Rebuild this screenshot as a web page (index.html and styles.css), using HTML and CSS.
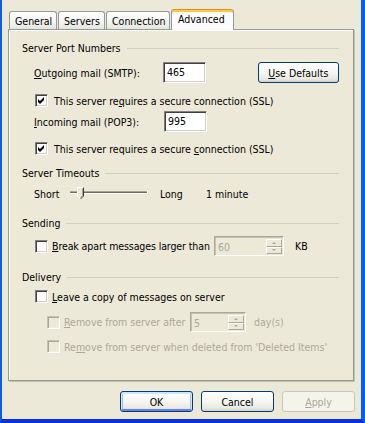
FILE: index.html
```html
<!DOCTYPE html>
<html lang="en">
<head>
    <meta charset="UTF-8">
    <meta name="viewport" content="width=device-width, initial-scale=1.0">
    <title>Account Properties</title>
    <link rel="stylesheet" href="styles.css">
</head>
<body>
    <div class="window">
        <div class="tabs">
            <div class="tab tab-general">General</div>
            <div class="tab tab-servers">Servers</div>
            <div class="tab tab-connection">Connection</div>
            <div class="tab tab-advanced active">Advanced</div>
        </div>

        <div class="panel">
            <div class="group-title gt-ports"><span>Server Port Numbers</span></div>
            <div class="row port-row smtp-row">
                <span class="label"><u>O</u>utgoing mail (SMTP):</span>
                <div class="field">465</div>
                <button class="btn defaults"><u>U</u>se Defaults</button>
            </div>
            <div class="row check-row ssl1-row">
                <span class="check"><svg viewBox="0 0 7 7" width="7" height="7"><polygon points="0,2 2,4 6,0 6,3 2,7 0,5" fill="#000"/></svg></span>
                <span class="check-label">This server re<u>q</u>uires a secure connection (SSL)</span>
            </div>
            <div class="row port-row pop-row">
                <span class="label"><u>I</u>ncoming mail (POP3):</span>
                <div class="field">995</div>
            </div>
            <div class="row check-row ssl2-row">
                <span class="check"><svg viewBox="0 0 7 7" width="7" height="7"><polygon points="0,2 2,4 6,0 6,3 2,7 0,5" fill="#000"/></svg></span>
                <span class="check-label">This server requires a secure <u>c</u>onnection (SSL)</span>
            </div>

            <div class="group-title gt-timeouts"><span>Server Timeouts</span></div>
            <div class="row slider-row">
                <span class="short">Short</span>
                <svg class="slider" width="86" height="16" viewBox="0 0 86 16">
                    <rect x="3" y="5" width="77" height="1" fill="#A7A69C"/>
                    <rect x="3" y="6" width="77" height="1" fill="#6F6E66"/>
                    <rect x="3" y="7" width="78" height="1" fill="#FFFFFF"/>
                    <rect x="80" y="5" width="1" height="3" fill="#FFFFFF"/>
                    <polygon points="10.5,1.5 16.5,1.5 16.5,10 13.5,13 10.5,10" fill="#ECE9D8"/>
                    <polyline points="10.5,10 10.5,1.5 16.5,1.5" fill="none" stroke="#FFFFFF"/>
                    <polyline points="16.5,1.5 16.5,10 13.5,13" fill="none" stroke="#404040"/>
                    <polyline points="15.5,2.5 15.5,9.5 13.5,11.5" fill="none" stroke="#A0A0A0"/>
                    <line x1="10.5" y1="10" x2="13" y2="12.5" stroke="#FFFFFF"/>
                </svg>
                <span class="long">Long</span>
                <span>1 minute</span>
            </div>

            <div class="group-title gt-sending"><span>Sending</span></div>
            <div class="row check-row break-row">
                <span class="check"></span>
                <span class="check-label break-label"><u>B</u>reak apart messages larger than</span>
                <div class="spin spin-kb">
                    <span class="spin-val">60</span>
                    <span class="spin-btns"><span class="spin-up"></span><span class="spin-down"></span></span>
                </div>
                <span class="unit-kb">KB</span>
            </div>

            <div class="group-title gt-delivery"><span>Delivery</span></div>
            <div class="row check-row leave-row">
                <span class="check"></span>
                <span class="check-label"><u>L</u>eave a copy of messages on server</span>
            </div>
            <div class="row check-row sub-row remove-row">
                <span class="check disabled"></span>
                <span class="check-label disabled-text remove-label"><u>R</u>emove from server after</span>
                <div class="spin spin-days">
                    <span class="spin-val">5</span>
                    <span class="spin-btns"><span class="spin-up"></span><span class="spin-down"></span></span>
                </div>
                <span class="disabled-text unit-days">day(s)</span>
            </div>
            <div class="row check-row sub-row deleted-row">
                <span class="check disabled"></span>
                <span class="check-label disabled-text">Re<u>m</u>ove from server when deleted from 'Deleted Items'</span>
            </div>
        </div>

        <div class="actions">
            <button class="btn default">OK</button>
            <button class="btn">Cancel</button>
            <button class="btn" disabled><u>A</u>pply</button>
        </div>
    </div>
</body>
</html>
```
FILE: styles.css
```css
* {
    box-sizing: border-box;
}
body {
    margin: 0;
    font-family: "DejaVu Sans Condensed", "Liberation Sans", sans-serif;
    font-size: 10.5px;
    color: #000;
}
.window {
    width: 365px;
    height: 423px;
    background: #ECE9D8;
    border-left: 2px solid #0A5DE8;
    border-right: 4px solid #0A5DE8;
    border-bottom: 4px solid #0831D9;
}

/* tabs */
.tabs {
    display: flex;
    align-items: flex-end;
    height: 29px;
    padding-left: 7px;
}
.tab {
    height: 18px;
    line-height: 18px;
    padding-left: 5px;
    margin-right: 1px;
    border: 1px solid #919B9C;
    border-bottom: none;
    border-radius: 3px 3px 0 0;
    background: linear-gradient(#FFFFFF, #F3F3EF 60%, #E6E5DE);
    white-space: nowrap;
}
.tab-general { width: 48px; }
.tab-servers { width: 47px; }
.tab-connection { width: 64px; }
.tab.active {
    position: relative;
    z-index: 1;
    width: 63px;
    height: 21px;
    line-height: 19px;
    padding-left: 6px;
    margin-bottom: -1px;
    background: #FCFCFE;
    border-top: 1px solid #E68B2C;
    box-shadow: inset 0 2px 0 #FFC73C;
}

/* panel */
.panel {
    margin-left: 6px;
    width: 346px;
    height: 352px;
    padding: 0 14px 0 13px;
    border: 1px solid #919B9C;
    box-shadow: inset 1px 1px 0 #FFFFFF, 1px 1px 0 #C5C2B2;
}
.group-title {
    display: flex;
    align-items: center;
    height: 14px;
}
.group-title::after {
    content: "";
    flex: 1;
    margin-left: 6px;
    border-top: 1px solid #D0D0BF;
}
.gt-ports { margin-top: 11px; }
.gt-timeouts { margin-top: 11px; }
.gt-sending { margin-top: 14px; }
.gt-delivery { margin-top: 14px; }

.row {
    display: flex;
    align-items: center;
    white-space: nowrap;
}
.port-row {
    height: 21px;
    padding-left: 12px;
}
.smtp-row { margin-top: 7px; }
.pop-row { margin-top: 4px; }
.port-row .label {
    width: 130px;
}
.field {
    width: 43px;
    height: 21px;
    line-height: 19px;
    padding-left: 3px;
    background: #FFFFFF;
    border: 1px solid;
    border-color: #808080 #FFFFFF #FFFFFF #808080;
    box-shadow: inset 1px 1px 0 #404040, inset -1px -1px 0 #D4D0C8;
}

.check-row {
    height: 13px;
    padding-left: 13px;
}
.ssl1-row { margin-top: 11px; }
.ssl2-row { margin-top: 10px; }
.check {
    display: flex;
    align-items: center;
    justify-content: center;
    width: 13px;
    height: 13px;
    flex: none;
    background: #FFFFFF;
    border: 1px solid;
    border-color: #808080 #FFFFFF #FFFFFF #808080;
    box-shadow: inset 1px 1px 0 #404040, inset -1px -1px 0 #D4D0C8;
}
.check.disabled {
    background: #ECE9D8;
    border-color: #C5C2B2 #FFFFFF #FFFFFF #C5C2B2;
    box-shadow: inset 1px 1px 0 #ACA899, inset -1px -1px 0 #F1EFE2;
}
.check-label {
    margin-left: 4px;
}
.ssl1-row .check-label, .ssl2-row .check-label {
    margin-left: 6px;
}
.disabled-text {
    color: #ACA899;
}

.slider-row {
    height: 16px;
    margin-top: 6px;
    padding-left: 12px;
}
.short { width: 33px; }
.slider { display: block; }
.long {
    width: 46px;
    margin-left: 7px;
}

.break-row { height: 20px; margin-top: 6px; }
.break-label {
    width: 158px;
    letter-spacing: -0.1px;
}
.spin {
    display: flex;
    height: 20px;
    margin-left: 4px;
    background: #ECE9D8;
    border: 1px solid;
    border-color: #ACA899 #FFFFFF #FFFFFF #ACA899;
    box-shadow: inset 1px 1px 0 #C5C2B2;
    color: #ACA899;
    padding: 2px 1px 1px 3px;
}
.spin-kb { width: 70px; }
.spin-days { width: 56px; }
.spin-val {
    flex: 1;
    line-height: 16px;
}
.spin-btns {
    display: flex;
    flex-direction: column;
    width: 16px;
}
.spin-up, .spin-down {
    flex: 1;
    display: flex;
    align-items: center;
    justify-content: center;
    border: 1px solid;
    border-color: #FFFFFF #ACA899 #ACA899 #FFFFFF;
    background: #ECE9D8;
}
.spin-up::after {
    content: "";
    border: 2px solid transparent;
    border-top: none;
    border-bottom: 2px solid #ACA899;
}
.spin-down::after {
    content: "";
    border: 2px solid transparent;
    border-bottom: none;
    border-top: 2px solid #ACA899;
}
.unit-kb { margin-left: 11px; }

.leave-row { margin-top: 6px; }
.sub-row { padding-left: 25px; }
.remove-row { height: 20px; margin-top: 9px; }
.remove-label { width: 122px; }
.unit-days { margin-left: 8px; }
.deleted-row { margin-top: 8px; }

/* buttons */
.btn {
    width: 73px;
    height: 21px;
    padding: 0;
    font: inherit;
    color: #000;
    border: 1px solid #003C74;
    border-radius: 3px;
    background: linear-gradient(#FFFFFF, #F5F5F1 55%, #E9E8E1 85%, #D6D0C5);
}
.btn.defaults {
    width: 82px;
    margin-left: 52px;
}
.btn.default {
    box-shadow: inset 0 1px 0 1px #CEE7FF, inset 0 -2px 0 0 #6982EE, inset 0 0 0 2px #A6C0F3;
}
.btn:disabled {
    color: #ACA899;
    border-color: #C9C7BA;
    background: #F5F4EA;
}
.actions {
    display: flex;
    justify-content: flex-end;
    gap: 8px;
    margin-top: 10px;
    padding-right: 6px;
}
```
